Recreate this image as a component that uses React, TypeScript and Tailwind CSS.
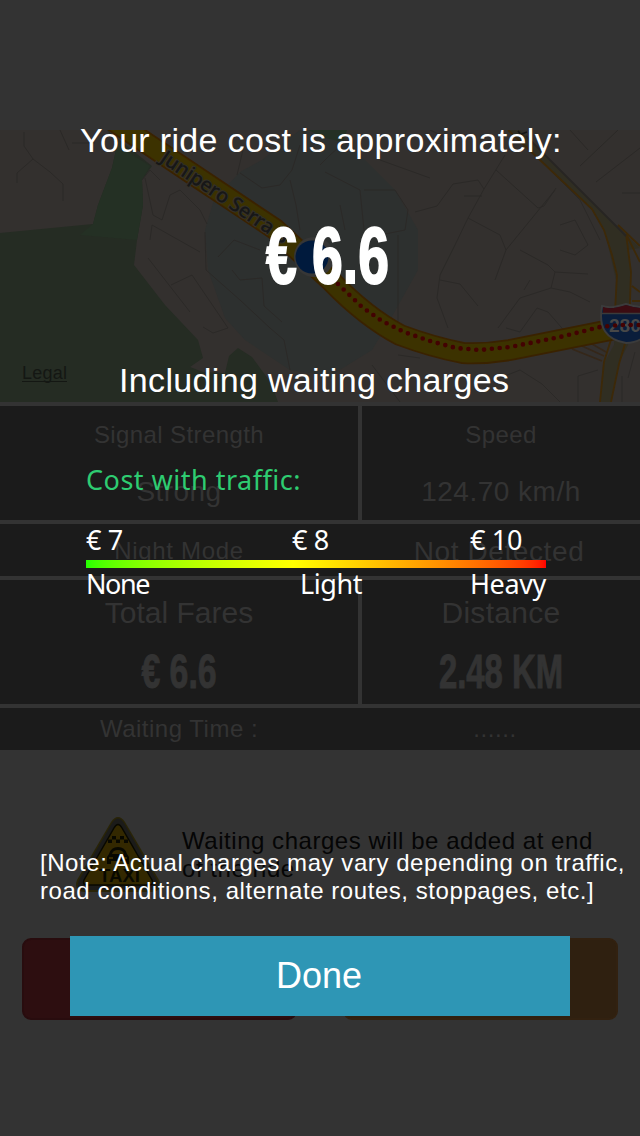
import React from 'react';

const RideMap: React.FC = () => (
  <svg viewBox="0 130 640 272" className="block w-full h-[272px] shrink-0">
    <rect x="0" y="130" width="640" height="272" fill="#33302e" />
    {/* campus area */}
    <path
      d="M214 200 L240 172 L262 160 L300 130 L345 140 L395 190 L418 230 L418 270 L390 320 L372 350 L330 376 L290 370 L245 340 L225 318 L208 270 L205 230 Z"
      fill="#2d302f"
    />
    {/* parks */}
    <path
      d="M107 130 L117 145 L112 168 L98 205 L93 224 L0 233 L0 402 L278 402 L271 383 L252 357 L238 348 L229 356 L225 373 L203 372 L190 367 L203 358 L198 340 L165 305 L134 265 L137 240 L143 205 L142 180 L152 166 Z"
      fill="#252c23"
    />
    <path d="M93 224 L98 205 L112 168 L117 145 L150 166 L142 180 L143 205 L137 240 L80 235 Z" fill="#243024" />
    <path d="M308 130 L347 130 L343 142 L325 138 Z" fill="#243024" />

    {/* side streets */}
    <g fill="none" stroke="#2b2927" strokeWidth="1">
      <path d="M24 132 L24 146 L33 159 L50 172 L63 184 L63 201 M33 159 L17 173 L17 183 M60 130 L69 150 M72 143 H95" />
      <path d="M142 180 L150 170 L160 180 M145 178 L153 215 L162 220 L170 195 L180 190 L200 210 L207 224 M150 240 L152 225 L200 252" />
      <path d="M148 258 L190 312 M171 285 L192 275 L228 328 M203 327 L213 333 L228 328" />
      <path d="M205 232 L206 270 L240 300 L270 328 L284 340 L290 370 M232 270 L240 280 L262 278 L264 306 L282 322 M218 257 L234 240 L260 250" />
      <path d="M237 175 L243 150 M240 173 L262 188 L280 185 L292 170 L300 145 M290 180 L296 205 L300 230" />
      <path d="M320 165 L330 155 L345 142 M325 172 L360 190 L364 230 M364 190 L395 190 L408 210 L405 230 L380 235 M340 205 L345 230 M398 235 V340 M380 160 L430 178" />
      <path d="M415 212 L437 206 L453 184 L478 180 L484 189 L468 218 L455 245 L440 275 L437 298 M464 196 H482 M484 189 L505 155 M496 170 L538 208 L544 206 L556 188 M468 218 L500 235 L506 250 L555 190" />
      <path d="M506 250 L495 280 M520 250 L548 265 L555 272 L551 288 L520 298 L498 328 M551 288 L570 292 L590 302 M555 272 L588 274 M440 280 L460 284 L478 306 M524 290 L530 280 M506 328 L520 332 L537 308 L548 312 L568 335 M437 298 L448 328" />
      <path d="M430 130 L455 142 M540 160 L580 200 L600 240 M560 225 L575 220 L588 245 L575 255 L560 250 M580 166 L618 130 M596 182 L640 148 M622 193 H640 M545 146 L556 130 M570 130 L588 150" />
      <path d="M372 365 L400 402 M398 355 L420 358 M578 376 V402 M578 376 L598 370 M500 378 L520 370 L542 384 L560 402 M622 376 V402 M635 352 L628 378" />
    </g>

    {/* secondary road */}
    <path
      d="M508 130 L520 130 L626 235 L640 248 L628 250 L631 270 L629 310 L628 345 L618 365 L611 402 L600 402 L603 365 L614 345 L616 280 L605 232 L592 210 L540 160 Z"
      fill="#302e22"
    />
    <path
      d="M508 130 L540 160 L592 209 L604 230 L612 255 L617 275 L614 330 L604 362 L600 402 M640 246 L618 225 M640 262 L626 234 L631 272 L629 330 L619 364 L611 402 M632 286 L640 292 M632 301 H640"
      fill="none"
      stroke="#3d2908"
      strokeWidth="1.8"
    />
    <path d="M526 136 L626 236" stroke="#272523" strokeWidth="1.8" />
    <path d="M572 349 L602 361 M582 346 L604 356 M592 344 L606 352" stroke="#352719" strokeWidth="1.5" fill="none" />
    <path d="M518 131 L523 137 M519 135 L527 132" stroke="#151515" strokeWidth="1.6" />

    {/* highway and route */}
    <path d="M112 120 L200 179 L275 229 L332 282 Q366 317 400 335 Q432 347 463 353 Q486 354 510 350 L640 324" fill="none" stroke="#3a2200" strokeWidth="22" />
    <path d="M112 120 L200 179 L275 229 L332 282 Q366 317 400 335 Q432 347 463 353 Q486 354 510 350 L640 324" fill="none" stroke="#3c3200" strokeWidth="18.5" />
    <defs>
      <path id="street-name" d="M159 161 L300 256" />
    </defs>
    <text fontSize="20" fontWeight="600" fill="#171717" stroke="#333029" strokeWidth="2" paintOrder="stroke" className="font-['Open_Sans',sans-serif]">
      <textPath href="#street-name" textLength="150">Junipero Serra B</textPath>
    </text>

    {/* I-280 shield */}
    <path d="M602 306 Q611 309 626 304 Q641 309 650 306 Q656 342 626 343 Q596 338 602 306 Z" fill="#0a1d3b" stroke="#3b3b3b" strokeWidth="2" />
    <path d="M603 307 Q611 310 626 305 Q641 310 650 307 V313 H603 Z" fill="#3b0c12" />
    <path d="M602 313.500 H650" stroke="#3b3b3b" strokeWidth="1.500" />
    <text x="609" y="332" fontSize="19" fontWeight="bold" fill="#484848" className="font-['Liberation_Sans',sans-serif]">
      280
    </text>
    <path
      d="M338 284 L362 307 L382 321 L404 332 L430 341 L456 348 L480 350 L510 347 L560 337 L600 327 L620 325 L640 325"
      fill="none"
      stroke="#430202"
      strokeWidth="4.6"
      strokeLinecap="round"
      strokeDasharray="0 7.85"
    />

    <circle cx="314" cy="257" r="20" fill="#363636" />
    <circle cx="312" cy="257" r="16.500" fill="#001a3d" />

    <text x="22" y="379" fontSize="18" textLength="45" fill="#141713" className="font-['Liberation_Sans',sans-serif]">
      Legal
    </text>
    <path d="M22 381.500 H67" stroke="#141713" />
  </svg>
);

const TaxiSign: React.FC = () => (
  <svg viewBox="74 815 88 80" className="block w-[88px] h-[80px] shrink-0">
    <path d="M111 822 Q118 812 125 822 L159 880 Q163 892 151 892 H85 Q73 892 77 880 Z" fill="#292407" />
    <path d="M112 823 Q118 814 124 823 L157 880 Q161 890 151 890 H85 Q75 890 79 880 Z" fill="#1b1b19" />
    <path d="M114 828 Q118 821 122 828 L152 880 Q154 885 149 885 H87 Q82 885 84 880 Z" fill="#332800" stroke="#080800" strokeWidth="1.5" />
    <g fill="#080800">
      <path d="M112 836h4v3.500h-4z M120 836h4v3.500h-4z M108 839.500h4v3.500h-4z M116 839.500h4v3.500h-4z M124 839.500h4v3.500h-4z" />
      <path d="M109 854 Q111 847 118 847 Q125 847 127 854 L129 857 V864 H125 V861 H111 V864 H107 V857 Z" />
      <text x="99" y="882" fontSize="18" fontWeight="bold" textLength="41" lengthAdjust="spacingAndGlyphs" className="font-['Liberation_Sans',sans-serif]">
        TAXI
      </text>
    </g>
    <path d="M112 854 Q113 850 118 850 Q123 850 124 854 Z M109 857h4v2h-4z M123 857h4v2h-4z" fill="#332800" />
  </svg>
);

const RideScreen: React.FC = () => (
  <div className="flex flex-col w-full h-full pt-[130px] text-[#333]">
    <RideMap />
    <div className="flex flex-col gap-1 py-1 shrink-0 text-center">
      <div className="flex gap-1 h-[114px]">
        <div className="w-[358px] bg-[#1b1b1b] pt-[15px]">
          <p className="text-[24px] leading-[28px] tracking-[0.4px]">Signal Strength</p>
          <p className="text-[28px] leading-[32px] mt-[27px] tracking-[0.4px]">Strong</p>
        </div>
        <div className="flex-1 bg-[#1b1b1b] pt-[15px]">
          <p className="text-[24px] leading-[28px] tracking-[0.4px]">Speed</p>
          <p className="text-[28px] leading-[32px] mt-[27px] tracking-[0.5px]">124.70 km/h</p>
        </div>
      </div>
      <div className="flex gap-1 h-[52px] bg-[#1b1b1b]">
        <p className="w-[358px] text-[24px] leading-[54px] tracking-[0.7px]">Night Mode</p>
        <p className="flex-1 pr-[4px] text-[28px] leading-[55px] tracking-[0.6px]">Not Detected</p>
      </div>
      <div className="flex gap-1 h-[124px]">
        <div className="w-[358px] bg-[#1b1b1b] pt-[16px]">
          <p className="text-[30px] leading-[34px]">Total Fares</p>
          <p className="text-[49px] leading-[52px] mt-[15px] font-bold scale-x-[0.69] [-webkit-text-stroke:1px_#333]">€ 6.6</p>
        </div>
        <div className="flex-1 bg-[#1b1b1b] pt-[16px]">
          <p className="text-[30px] leading-[34px] tracking-[0.3px]">Distance</p>
          <p className="text-[49px] leading-[52px] mt-[15px] font-bold scale-x-[0.67] [-webkit-text-stroke:1px_#333]">2.48 KM</p>
        </div>
      </div>
      <div className="flex gap-1 h-[42px] bg-[#1b1b1b]">
        <p className="w-[358px] text-[24px] leading-[42px] tracking-[0.5px]">Waiting Time :</p>
        <p className="flex-1 pr-[12px] text-[24px] leading-[42px] tracking-[0.6px]">......</p>
      </div>
    </div>
    <div className="flex pl-[74px] pt-[61px] h-[184px] shrink-0 text-[#050505]">
      <TaxiSign />
      <p className="ml-5 mt-[12px] text-[24px] leading-[28px] tracking-[0.54px]">
        Waiting charges will be added at end
        <br />
        of the ride
      </p>
    </div>
    <div className="flex justify-between px-[22px]">
      <div className="w-[275px] h-[82px] rounded-[9px] bg-[#2d0e10] border-2 border-[#280c0e]" />
      <div className="w-[275px] h-[82px] rounded-[9px] bg-[#2f2010] border-2 border-[#322110]" />
    </div>
  </div>
);

const CostOverlay: React.FC = () => (
  <div className="absolute inset-0 flex flex-col text-white">
    <h1 className="mt-[120px] pl-[80px] text-[34px] leading-[40px] tracking-[0.33px] whitespace-nowrap">Your ride cost is approximately:</h1>
    <p className="mt-[52px] ml-[266px] text-[79px] leading-[88px] font-bold whitespace-nowrap origin-left scale-x-[0.7] [-webkit-text-stroke:2px_white]">€ 6.6</p>
    <p className="mt-[60px] pl-[119px] text-[34px] leading-[40px] tracking-[0.34px] whitespace-nowrap">Including waiting charges</p>

    <div className="mt-[60px] ml-[86px] w-[460px] h-[140px] text-[27px] leading-[40px] font-['Noto_Sans',sans-serif] whitespace-nowrap">
      <p className="text-[#2ecc71] tracking-[0.5px]">Cost with traffic:</p>
      <div className="flex mt-[20px] h-[40px] tracking-[-0.3px]">
        <span className="w-[206px]">€ 7</span>
        <span className="w-[178px]">€ 8</span>
        <span>€ 10</span>
      </div>
      <div className="h-2 bg-linear-to-r from-[#22ff00] via-[#ffff00] via-45% to-[#ff0000]" />
      <div className="flex -mt-[4px] h-[40px]">
        <span className="w-[214px] tracking-[-1.4px]">None</span>
        <span className="w-[170px] tracking-[-0.4px]">Light</span>
        <span className="tracking-[-0.4px]">Heavy</span>
      </div>
    </div>

    <p className="mt-[249px] pl-[40px] text-[24px] leading-[28px] tracking-[0.56px] whitespace-nowrap">
      [Note: Actual charges may vary depending on traffic,
      <br />
      road conditions, alternate routes, stoppages, etc.]
    </p>
    <button className="mt-[31px] mx-[70px] pr-[2px] h-[80px] shrink-0 bg-[#2e96b5] text-[36px]">Done</button>
  </div>
);

const App: React.FC = () => (
  <div className="relative w-[640px] h-[1136px] overflow-hidden bg-[#333] font-['Liberation_Sans',sans-serif]">
    <RideScreen />
    <CostOverlay />
  </div>
);

export default App;
